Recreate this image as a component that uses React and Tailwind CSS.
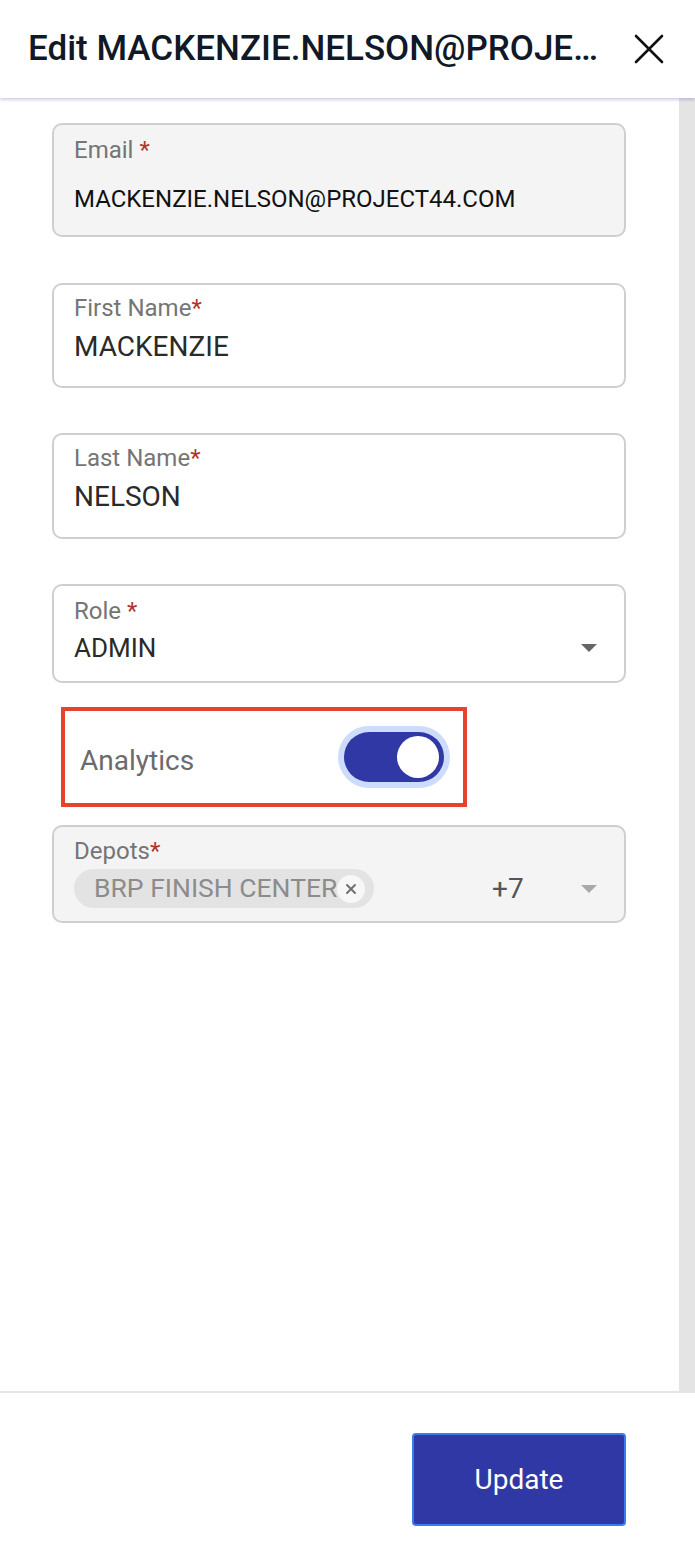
import { useState } from 'react'

function Req({ spaced }) {
  return <span className={`text-[#b3332b] ${spaced ? 'ml-[6px]' : ''}`}>*</span>
}

function Caret({ light }) {
  return (
    <svg width="16" height="8" viewBox="0 0 16 8" className="shrink-0">
      <path d="M0 0h16L8 8z" fill={light ? '#a9a9a9' : '#666666'} />
    </svg>
  )
}

export default function App() {
  const [analytics, setAnalytics] = useState(true)

  return (
    <div className="w-[695px] h-[1560px] flex flex-col bg-white font-['Roboto',sans-serif] relative overflow-hidden">
      {/* dark backdrop peeking at the drawer corner */}
      <div className="absolute top-0 right-0 w-[10px] h-[10px] bg-[#3a3a3a]">
        <div className="w-full h-full bg-white rounded-tr-[10px]" />
      </div>

      {/* Header */}
      <header className="relative z-10 h-[98px] shrink-0 flex items-center gap-[16px] pl-[28px] pr-[30px] bg-white shadow-[0_2px_3px_rgba(88,76,200,0.28)]">
        <h1 className="flex-1 min-w-0 truncate text-[35px] font-medium text-[#111827] leading-[42px]">
          Edit MACKENZIE.NELSON@PROJECT44.COM
        </h1>
        <button className="shrink-0 w-[32px] h-[32px] flex items-center justify-center">
          <svg width="30" height="30" viewBox="0 0 30 30" fill="none" stroke="#111" strokeWidth="2.6" strokeLinecap="round">
            <path d="M2 2l26 26M28 2L2 28" />
          </svg>
        </button>
      </header>

      {/* Body */}
      <div className="flex-1 min-h-0 flex">
        <div className="flex-1 min-w-0 pl-[52px] pr-[53px] pt-[25px] flex flex-col">
          {/* Email (read-only) */}
          <div className="h-[114px] rounded-[10px] border-2 border-[#cfcfcf] bg-[#f4f4f4] px-[20px] pt-[11px] flex flex-col">
            <div className="text-[24px] leading-[28px] text-[#757575]">
              Email<Req spaced />
            </div>
            <div className="mt-[21px] text-[24px] leading-[28px] text-[#111]">MACKENZIE.NELSON@PROJECT44.COM</div>
          </div>

          {/* First name */}
          <div className="mt-[46px] h-[105px] rounded-[10px] border-2 border-[#cfcfcf] bg-white px-[20px] pt-[9px] flex flex-col">
            <div className="text-[24px] leading-[28px] text-[#757575]">
              First Name<Req />
            </div>
            <div className="mt-[9px] text-[28px] leading-[32px] text-[#2a2a2a]">MACKENZIE</div>
          </div>

          {/* Last name */}
          <div className="mt-[45px] h-[106px] rounded-[10px] border-2 border-[#cfcfcf] bg-white px-[20px] pt-[9px] flex flex-col">
            <div className="text-[24px] leading-[28px] text-[#757575]">
              Last Name<Req />
            </div>
            <div className="mt-[9px] text-[28px] leading-[32px] text-[#2a2a2a]">NELSON</div>
          </div>

          {/* Role */}
          <div className="mt-[45px] h-[99px] rounded-[10px] border-2 border-[#cfcfcf] bg-white pl-[20px] pr-[27px] pt-[11px] flex flex-col">
            <div className="text-[24px] leading-[28px] text-[#757575]">
              Role<Req spaced />
            </div>
            <div className="mt-[7px] flex items-center justify-between">
              <span className="text-[26px] leading-[32px] text-[#2a2a2a]">ADMIN</span>
              <Caret />
            </div>
          </div>

          {/* Analytics toggle */}
          <div className="mt-[24px] ml-[9px] w-[406px] h-[100px] border-4 border-[#e5432b] flex items-center justify-between pl-[15px] pr-[13px]">
            <span className="mt-[8px] text-[28px] text-[#6b6b6b]">Analytics</span>
            <button
              onClick={() => setAnalytics(!analytics)}
              className="w-[112px] h-[62px] rounded-full bg-[#cddcfb] p-[6px] flex"
            >
              <span className={`flex-1 rounded-full flex items-center px-[5px] ${analytics ? 'bg-[#3038a6] justify-end' : 'bg-[#b0b0b0] justify-start'}`}>
                <span className="w-[42px] h-[42px] rounded-full bg-white" />
              </span>
            </button>
          </div>

          {/* Depots (read-only) */}
          <div className="mt-[18px] h-[98px] rounded-[10px] border-2 border-[#cfcfcf] bg-[#f4f4f4] pl-[20px] pr-[27px] pt-[10px] flex flex-col">
            <div className="text-[24px] leading-[28px] text-[#757575]">
              Depots<Req />
            </div>
            <div className="mt-[4px] flex items-center">
              <div className="h-[39px] w-[300px] rounded-full bg-[#e3e3e3] pl-[20px] pr-[9px] flex items-center">
                <span className="text-[26.5px] leading-none text-[#8c8c8c] whitespace-nowrap">BRP FINISH CENTER</span>
                <span className="ml-auto w-[28px] h-[28px] rounded-full bg-[#f7f7f7] flex items-center justify-center">
                  <svg width="12" height="12" viewBox="0 0 12 12" stroke="#707070" strokeWidth="2" strokeLinecap="round">
                    <path d="M2 2l8 8M10 2L2 10" />
                  </svg>
                </span>
              </div>
              <span className="ml-[118px] text-[28px] leading-none text-[#555]">+7</span>
              <span className="ml-auto">
                <Caret light />
              </span>
            </div>
          </div>
        </div>

        {/* scrollbar track */}
        <div className="w-[16px] shrink-0 bg-[#e4e4e4]" />
      </div>

      {/* Footer */}
      <footer className="h-[169px] shrink-0 border-t-2 border-[#e5e5e5] flex justify-end items-start pt-[40px] pr-[69px]">
        <button className="w-[214px] h-[93px] rounded-[4px] bg-[#3038a6] border-2 border-[#3b7bf0] text-white text-[28px]">
          Update
        </button>
      </footer>
    </div>
  )
}
